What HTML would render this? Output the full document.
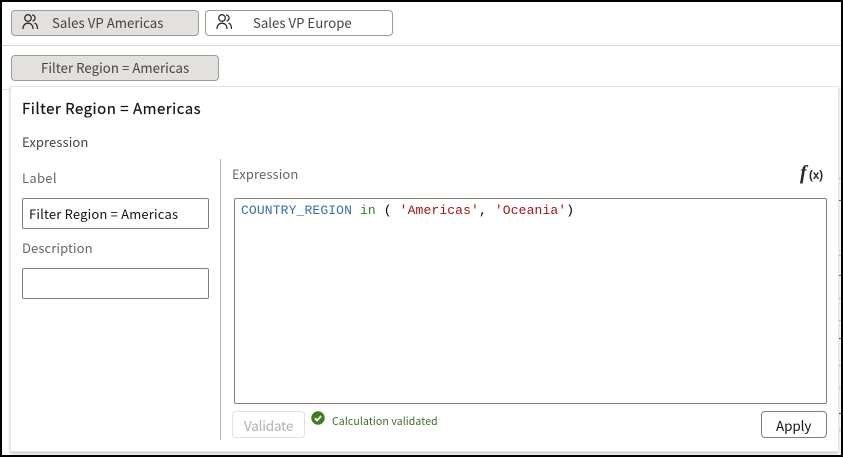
<!DOCTYPE html>
<html><head><meta charset="utf-8">
<style>
html,body{margin:0;padding:0;background:#fff}
body{width:843px;height:457px;position:relative;overflow:hidden;font-family:"Noto Sans CJK JP","Liberation Sans",sans-serif;color:#47433f}
.a{position:absolute;box-sizing:border-box;white-space:nowrap}
.t{line-height:18px}
.btn{border:1px solid #9e9a95;border-radius:4px}
.inp{border:1px solid #857f78;border-radius:2px;background:#fff}
.k{position:absolute;left:838px;width:3px;height:1px;background:#c4c4c4}
</style></head><body>
<div class="a" style="left:2px;top:45px;width:839px;height:1px;background:#d6d6d6"></div>
<div class="a" style="left:2px;top:89px;width:839px;height:1px;background:#e0e0e0"></div>
<div class="k" style="top:178px"></div>
<div class="k" style="top:200px;background:#3a6ea5"></div>
<div class="k" style="top:255px"></div>
<div class="k" style="top:275px;background:#3a6ea5"></div>
<div class="k" style="top:298px"></div>
<div class="k" style="top:320px"></div>
<div class="k" style="top:338px;background:#555"></div>
<div class="k" style="top:365px"></div>
<div class="k" style="top:387px"></div>
<div class="k" style="top:413px;background:#555"></div>
<div class="k" style="top:430px"></div>

<div class="a btn" style="left:11px;top:10px;width:188px;height:26px;background:#e3e1de"></div>
<svg class="a" style="left:21px;top:13px" width="18" height="17" viewBox="0 0 18 17" fill="none" stroke="#312d2a" stroke-width="1.3"><circle cx="7" cy="5" r="3.3"/><path d="M2 16c0-3.800 2-5.800 5-5.800s5 2 5 5.800M11 2c2 0 3 1.400 3 3s-1 2.800-2.600 3M13.500 10c1.800.6 3 2.600 3 6"/></svg>
<div class="a t" style="left:52px;top:14px;font-size:13.2px;letter-spacing:.04px">Sales VP Americas</div>

<div class="a btn" style="left:205px;top:10px;width:188px;height:26px;background:#fff"></div>
<svg class="a" style="left:215px;top:13px" width="18" height="17" viewBox="0 0 18 17" fill="none" stroke="#312d2a" stroke-width="1.3"><circle cx="7" cy="5" r="3.3"/><path d="M2 16c0-3.800 2-5.800 5-5.800s5 2 5 5.800M11 2c2 0 3 1.400 3 3s-1 2.800-2.600 3M13.500 10c1.800.6 3 2.600 3 6"/></svg>
<div class="a t" style="left:253px;top:14px;font-size:13.2px;letter-spacing:.01px">Sales VP Europe</div>

<div class="a btn" style="left:11px;top:55px;width:208px;height:26px;background:#e3e1de"></div>
<div class="a t" style="left:41px;top:59px;font-size:13.2px;letter-spacing:.05px">Filter Region = Americas</div>

<div class="a" style="left:10px;top:86px;width:829px;height:366px;background:#fff;border:1px solid #e4e4e4;box-shadow:0 2px 3px rgba(0,0,0,.2)"></div>
<div class="a t" style="left:22px;top:100px;font-size:15px;letter-spacing:.5px;color:#161513;-webkit-text-stroke:.2px #161513">Filter Region = Americas</div>
<div class="a t" style="left:22px;top:133px;font-size:13px;letter-spacing:.1px">Expression</div>

<div class="a" style="left:220px;top:159px;width:1px;height:281px;background:#b5b1ac"></div>

<div class="a t" style="left:22px;top:169px;font-size:13px;letter-spacing:.3px;color:#6b665f">Label</div>
<div class="a inp" style="left:22px;top:198px;width:187px;height:31px"></div>
<div class="a t" style="left:29px;top:205px;font-size:13px;letter-spacing:.18px;color:#161513">Filter Region = Americas</div>
<div class="a t" style="left:22px;top:239px;font-size:13px;letter-spacing:.1px;color:#6b665f">Description</div>
<div class="a inp" style="left:22px;top:268px;width:187px;height:31px"></div>

<div class="a t" style="left:232px;top:165px;font-size:13px;letter-spacing:.1px;color:#6b665f">Expression</div>
<div class="a" style="left:800px;top:161px;font:italic bold 20px/24px 'Liberation Serif',serif;color:#2b2926">f</div>
<div class="a" style="left:809px;top:169px;font:bold 11.500px/14px 'Liberation Sans',sans-serif;color:#2b2926">(x)</div>

<div class="a inp" style="left:234px;top:198px;width:593px;height:206px"></div>
<div class="a" style="left:241px;top:203px;font:13px/15px 'Liberation Mono',monospace;letter-spacing:.13px;color:#000"><span style="color:#3a6ea5">COUNTRY_REGION</span> <span style="color:#2e7d32">in</span> ( <span style="color:#a31515">'Americas'</span>, <span style="color:#a31515">'Oceania'</span>)</div>

<div class="a" style="left:232px;top:411px;width:73px;height:27px;border:1px solid #e3e1de;border-radius:4px"></div>
<div class="a t" style="left:244px;top:416px;font-size:13.500px;letter-spacing:-.2px;color:#b3afaa">Validate</div>
<svg class="a" style="left:311px;top:411px" width="14" height="14" viewBox="0 0 14 14"><circle cx="7" cy="7" r="6.700" fill="#3f7d21"/><path d="M3.800 7.200l2.200 2.200 4.200-4.400" fill="none" stroke="#fff" stroke-width="1.800"/></svg>
<div class="a t" style="left:332px;top:413px;font-size:10.500px;letter-spacing:.11px;color:#3f6b2c">Calculation validated</div>

<div class="a" style="left:761px;top:411px;width:66px;height:27px;border:1px solid #857f78;border-radius:4px;background:#fff"></div>
<div class="a t" style="left:776px;top:416px;font-size:13.500px;letter-spacing:-.1px;color:#161513">Apply</div>

<div class="a" style="left:0;top:0;width:843px;height:2px;background:#000"></div>
<div class="a" style="left:0;top:455px;width:843px;height:2px;background:#000"></div>
<div class="a" style="left:0;top:0;width:2px;height:457px;background:#000"></div>
<div class="a" style="left:841px;top:0;width:2px;height:457px;background:#000"></div>
</body></html>
